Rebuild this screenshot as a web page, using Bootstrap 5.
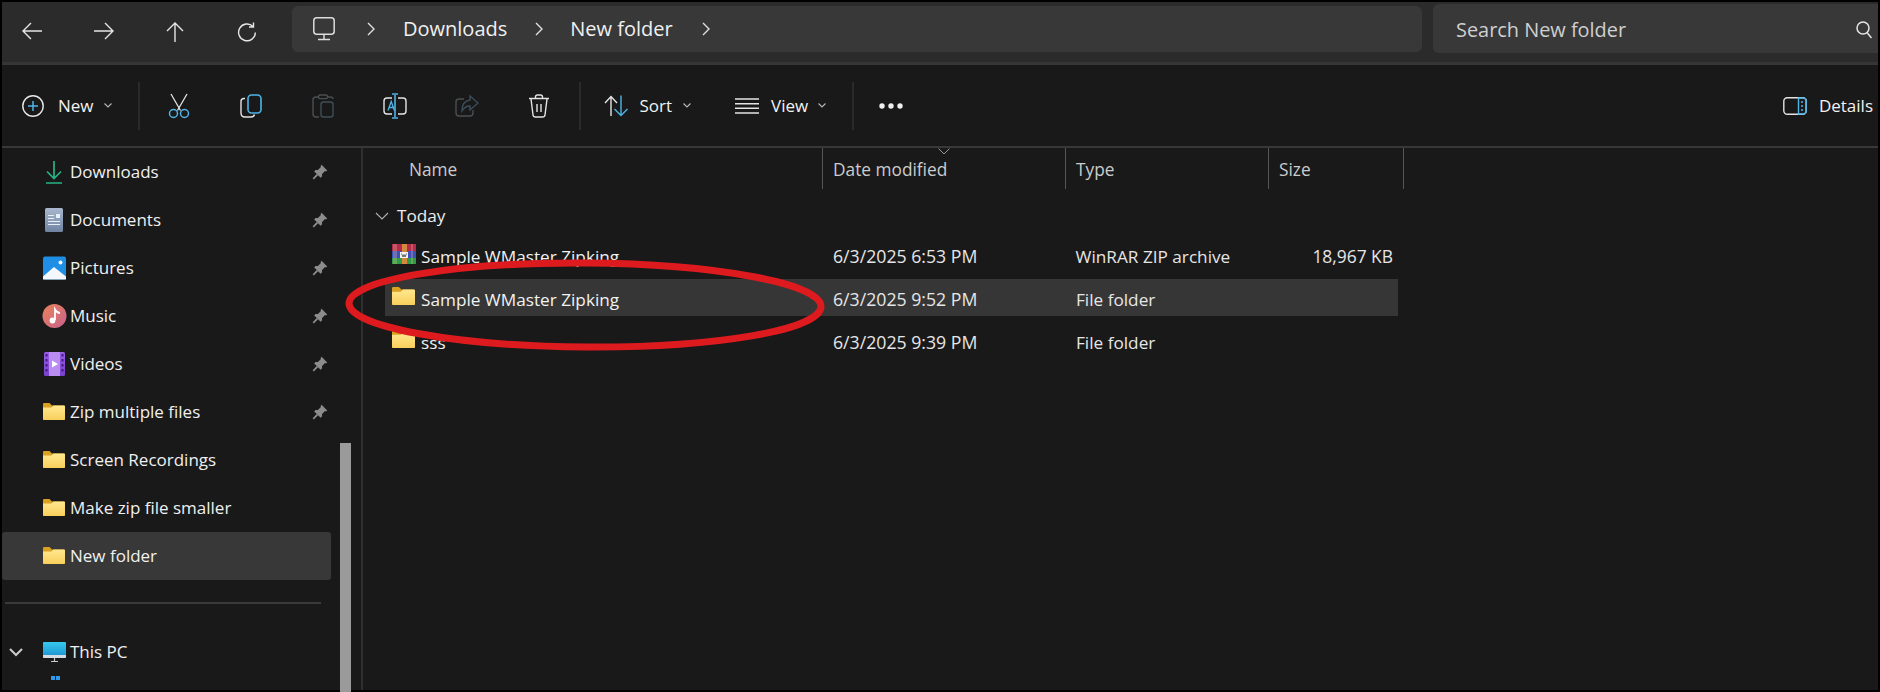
<!DOCTYPE html>
<html lang="en">
<head>
<meta charset="utf-8">
<title>New folder - File Explorer</title>
<link href="https://cdn.jsdelivr.net/npm/bootstrap@5.3.0/dist/css/bootstrap.min.css" rel="stylesheet">
<style>
html,body{width:1880px;height:692px;margin:0;overflow:hidden;background:#000;font-family:"Open Sans","Noto Sans",sans-serif;color:#f0f0f0}
.fx-win{width:1880px;height:692px;padding:2px 2px 2px 2px;position:relative;overflow:hidden}
.fx-defs{width:0;height:0;overflow:hidden;position:absolute}
.fx-top{height:60px;background:#2b2b2b}
.fx-navbtns{width:290px;padding-left:20px;flex:none}
.fx-navbtn{width:71.500px;height:20px;flex:none}
.fx-crumb{width:1130px;height:46px;margin-top:4px;background:#383838;border-radius:6px;padding-left:21px;font-size:20px}
.fx-search{width:445px;height:49px;margin:2px 0 0 11px;background:#383838;border-radius:6px 0 0 6px;padding:2px 6px 0 23px;font-size:19.900px;color:#cfcfcf}
.fx-rule{height:3px;background:#363636}
.fx-tools{height:81px;background:#191919;padding-left:20px;font-size:17px}
.fx-rule2{height:2px;background:#383838}
.fx-tool{width:72px;height:40px}
.fx-vbar{width:2px;height:48px;background:#2a2a2a}
.fx-lbl{color:#f2f2f2}
.fx-body{height:542px;background:#191919}
.fx-side{width:359px;height:542px;flex:none}
.fx-list{width:329px;overflow:hidden;height:542px;font-size:17px}
.fx-row{height:48px;padding-left:40px;padding-right:2px}
.fx-ico{width:26px;height:26px;flex:none;margin-right:2px}
.fx-name{flex:1;color:#f0f0f0;white-space:nowrap}
.fx-pin{width:16px;height:16px;margin-right:1px;flex:none}
.fx-cur{background:#383838;border-radius:3px}
.fx-sep{height:2px;background:#3a3a3a;margin:22px 10px 24px 3px}
.fx-chev{width:16px;height:16px;margin:0 18px 0 -34px;flex:none}
.fx-track{width:30px;padding:295px 0 0 9px}
.fx-thumb{width:11px;height:250px;background:#9a9a9a}
.fx-vline{width:2px;background:#2f2f2f;height:542px;flex:none}
.fx-main{flex:1;font-size:17.200px;position:relative}
.fx-head{height:44px;margin-left:22px;color:#cccccc;font-size:17.300px}
.fx-col1{width:438px;padding-left:24px}
.fx-col2{width:243px;padding-left:10px}
.fx-col3{width:203px;padding-left:10px}
.fx-col4{width:135px;padding-left:10px}
.fx-hcell{height:41px;border-right:1px solid #555;position:relative;padding-top:2px;flex:none}
.fx-caret{position:absolute;left:115px;top:0;width:12px;height:7px}
.fx-group{height:44px;padding-left:12px;padding-top:4px;color:#ececec}
.fx-line{height:37px;margin:0 0 6px 22px;width:1013px;color:#e6e6e6}
.fx-line.fx-on{background:#363636}
.fx-first{padding-left:7px;width:438px;color:#f2f2f2;flex:none}
.fx-right{width:130px;text-align:right;padding-right:5px;font-size:17.400px}
.fx-date{font-size:17.700px}
.fx-oval{position:absolute;left:0;top:0;pointer-events:none}
.fx-m14{margin-left:14px}.fx-m10{margin-left:10px}.fx-m26{margin-left:26px}.fx-m3{margin-left:3px}.fx-m4{margin-left:4px}.fx-m23{margin-left:23px}.fx-m12{margin-left:12px}.fx-m11{margin-left:11px}.fx-m44{margin-left:44px}.fx-m25{margin-left:25px}
.fx-det{margin-right:5px}
.fx-ch0{margin-left:32px}
.fx-c1{margin:0 28px 0 28px}.fx-c2{margin:0 29px 0 27px}
.fx-tail{height:20px}
.fx-t{padding-top:4px}
.fx-ftext{margin-left:1px}
</style>
</head>
<body>
<svg class="fx-defs" aria-hidden="true">
<defs>
<linearGradient id="gf" x1="0" y1="0" x2="0" y2="1"><stop offset="0" stop-color="#ffe88f"/><stop offset="1" stop-color="#f8cf5c"/></linearGradient>
<linearGradient id="gpc" x1="0" y1="0" x2="0" y2="1"><stop offset="0" stop-color="#35c9ee"/><stop offset="1" stop-color="#1c8fd0"/></linearGradient>
<linearGradient id="gmu" x1="0" y1="0" x2="1" y2="1"><stop offset="0" stop-color="#e8845a"/><stop offset="1" stop-color="#c9608f"/></linearGradient>
<linearGradient id="gdoc" x1="0" y1="0" x2="0" y2="1"><stop offset="0" stop-color="#a9b8cf"/><stop offset="1" stop-color="#6f83a1"/></linearGradient>
<linearGradient id="gvid" x1="0" y1="0" x2="0" y2="1"><stop offset="0" stop-color="#9b5ce8"/><stop offset="1" stop-color="#7b3fcf"/></linearGradient>
<symbol id="i-folder" viewBox="0 0 22 17"><path d="M0 1.200Q0 0 1.200 0H6.500L9 2.400H20.800Q22 2.400 22 3.600V15.800Q22 17 20.800 17H1.200Q0 17 0 15.800Z" fill="#d9a021"/><path d="M0 4.400L8.400 4.400 10.400 2.400H20.800Q22 2.400 22 3.600V15.800Q22 17 20.800 17H1.200Q0 17 0 15.800Z" fill="url(#gf)"/></symbol>
<symbol id="i-pin" viewBox="0 0 16 16"><path d="M9.600 .8L15.200 6.400 14 7.400 13 7.100 10.100 10 10 12.500 8.600 13.800 2.200 7.400 3.500 6 6 5.900 8.900 3 8.600 2Z" fill="#8c8c8c"/><path d="M5.400 10.600L1.200 14.800" stroke="#8c8c8c" stroke-width="1.800" fill="none"/></symbol>
</defs>
</svg>
<div class="fx-win">
  <div class="fx-top d-flex">
    <div class="fx-navbtns d-flex align-items-start">
      <div class="fx-navbtn d-flex mt-3 pt-1"><svg width="20" height="18" viewBox="0 0 20 18" fill="none" stroke="#e6e6e6" stroke-width="1.400"><path d="M20 9H1M9 1L1 9l8 8"/></svg></div>
      <div class="fx-navbtn d-flex mt-3 pt-1"><svg width="20" height="18" viewBox="0 0 20 18" fill="none" stroke="#e6e6e6" stroke-width="1.400"><path d="M0 9H19M11 1l8 8-8 8"/></svg></div>
      <div class="fx-navbtn d-flex mt-3 pt-1"><svg width="20" height="20" viewBox="0 0 20 20" fill="none" stroke="#e6e6e6" stroke-width="1.400"><path d="M10 20V1M2 9l8-8 8 8"/></svg></div>
      <div class="fx-navbtn d-flex mt-3 pt-1"><svg width="20" height="20" viewBox="0 0 20 20" fill="none" stroke="#e6e6e6" stroke-width="1.400"><path d="M16 4.500A8.400 8.400 0 1 0 18.400 10.500M16.500 .5V5H12"/></svg></div>
    </div>
    <div class="fx-crumb d-flex align-items-center">
      <svg width="22" height="24" viewBox="0 0 22 24" fill="none" stroke="#dcdcdc" stroke-width="1.500"><rect x=".8" y=".8" width="20.400" height="16.400" rx="3"/><path d="M11 17.500V22M5 22.500H17" /></svg>
      <svg class="fx-ch0" width="8" height="14" viewBox="0 0 8 14" fill="none" stroke="#e0e0e0" stroke-width="1.400"><path d="M1 1l6 6-6 6"/></svg>
      <span class="fx-c1">Downloads</span>
      <svg width="8" height="14" viewBox="0 0 8 14" fill="none" stroke="#e0e0e0" stroke-width="1.400"><path d="M1 1l6 6-6 6"/></svg>
      <span class="fx-c2">New folder</span>
      <svg width="8" height="14" viewBox="0 0 8 14" fill="none" stroke="#e0e0e0" stroke-width="1.400"><path d="M1 1l6 6-6 6"/></svg>
    </div>
    <div class="fx-search d-flex align-items-center justify-content-between">
      <span>Search New folder</span>
      <svg width="16" height="18" viewBox="0 0 16 18" fill="none" stroke="#e6e6e6" stroke-width="1.500"><circle cx="7" cy="7" r="6"/><path d="M11 11.500l4.500 5.500"/></svg>
    </div>
  </div>
  <div class="fx-rule"></div>
  <div class="fx-tools d-flex align-items-center">
    <svg width="22" height="22" viewBox="0 0 22 22" fill="none"><circle cx="11" cy="11" r="10.200" stroke="#e8e8e8" stroke-width="1.400"/><path d="M11 6v10M6 11h10" stroke="#4fb4e8" stroke-width="1.500"/></svg>
    <span class="fx-lbl fx-m14">New</span>
    <svg class="fx-m10" width="8" height="5" viewBox="0 0 8 5" fill="none" stroke="#b8b8b8" stroke-width="1.100"><path d="M.5.5L4 4 7.500.5"/></svg>
    <div class="fx-vbar fx-m26"></div>
    <div class="fx-tool d-flex align-items-center justify-content-center fx-m3">
      <svg width="22" height="26" viewBox="0 0 22 26" fill="none"><path d="M3 1l9.500 16.500M19 1L9.500 17.500" stroke="#e4e4e4" stroke-width="1.300"/><circle cx="5.500" cy="20.500" r="4" stroke="#4fb4e8" stroke-width="1.500"/><circle cx="16.500" cy="20.500" r="4" stroke="#4fb4e8" stroke-width="1.500"/></svg>
    </div>
    <div class="fx-tool d-flex align-items-center justify-content-center">
      <svg width="22" height="24" viewBox="0 0 22 24" fill="none"><path d="M5 4.500H4Q1 4.500 1 7.500V19Q1 23 5 23H11Q14 23 14.500 20.500" stroke="#e4e4e4" stroke-width="1.400"/><rect x="8" y="1" width="13" height="18" rx="3.500" stroke="#4fb4e8" stroke-width="1.600"/></svg>
    </div>
    <div class="fx-tool d-flex align-items-center justify-content-center">
      <svg width="22" height="24" viewBox="0 0 22 24" fill="none" stroke="#4a4f52" stroke-width="1.400"><path d="M7 3H4Q1 3 1 6V20Q1 23 4 23H7"/><path d="M15 3H18Q21 3 21 5"/><rect x="6.500" y="1" width="9" height="3.600" rx="1.600"/><rect x="9" y="8" width="12" height="15" rx="2.500" stroke="#3f4f57"/></svg>
    </div>
    <div class="fx-tool d-flex align-items-center justify-content-center">
      <svg width="24" height="26" viewBox="0 0 24 26" fill="none"><path d="M9 5H4Q1 5 1 8V18Q1 21 4 21H9M15 5H20Q23 5 23 8V18Q23 21 20 21H15" stroke="#e4e4e4" stroke-width="1.400"/><path d="M12 2V24M9 1H15M9 25H15" stroke="#4fb4e8" stroke-width="1.600"/><path d="M5 17.500L8.200 8.500 11.400 17.500M6 14.500H10.400" stroke="#4fb4e8" stroke-width="1.300"/></svg>
    </div>
    <div class="fx-tool d-flex align-items-center justify-content-center">
      <svg width="24" height="24" viewBox="0 0 24 24" fill="none" stroke-width="1.400"><path d="M9 5H4Q1 5 1 8V19Q1 22 4 22H15Q18 22 18 19V16" stroke="#4a4f52"/><path d="M15 2L23 9 15 16V12Q10 12 7 17 7 7 15 6Z" stroke="#3a4d58"/></svg>
    </div>
    <div class="fx-tool d-flex align-items-center justify-content-center">
      <svg width="22" height="24" viewBox="0 0 22 24" fill="none" stroke="#e4e4e4" stroke-width="1.400"><path d="M1 4.500H21M3 5L5 21Q5.300 23 7.500 23H14.500Q16.700 23 17 21L19 5M7.500 4V3Q7.500 1 9.500 1H12.500Q14.500 1 14.500 3V4M9 10V18M13 10V18"/></svg>
    </div>
    <div class="fx-vbar fx-m4"></div>
    <svg class="fx-m23" width="24" height="22" viewBox="0 0 24 22" fill="none" stroke-width="1.400"><path d="M7 21V1.500M1 8l6-6.500L13 8" stroke="#e4e4e4"/><path d="M17 .5V20.500M10.500 14l6.500 6.500 6.500-6.500" stroke="#4fb4e8"/></svg>
    <span class="fx-lbl fx-m12">Sort</span>
    <svg class="fx-m11" width="8" height="5" viewBox="0 0 8 5" fill="none" stroke="#b8b8b8" stroke-width="1.100"><path d="M.5.5L4 4 7.500.5"/></svg>
    <svg class="fx-m44" width="24" height="16" viewBox="0 0 24 16" fill="none" stroke="#e4e4e4" stroke-width="1.500"><path d="M0 1H24M0 5.700H24M0 10.300H24M0 15H24"/></svg>
    <span class="fx-lbl fx-m12">View</span>
    <svg class="fx-m10" width="8" height="5" viewBox="0 0 8 5" fill="none" stroke="#b8b8b8" stroke-width="1.100"><path d="M.5.5L4 4 7.500.5"/></svg>
    <div class="fx-vbar fx-m26"></div>
    <svg class="fx-m25" width="24" height="6" viewBox="0 0 24 6" fill="#f0f0f0"><circle cx="3" cy="3" r="2.700"/><circle cx="12" cy="3" r="2.700"/><circle cx="21" cy="3" r="2.700"/></svg>
    <div class="flex-grow-1"></div>
    <svg width="24" height="18" viewBox="0 0 24 18" fill="none" stroke-width="1.400"><rect x=".8" y=".8" width="22.400" height="16.400" rx="3.500" stroke="#e4e4e4"/><path d="M15.500 1V17H20Q23.200 17 23.200 14V4Q23.200 1 20 1Z" stroke="#4fb4e8"/><path d="M18 5H20M18 9H20M18 13H20" stroke="#4fb4e8"/></svg>
    <span class="fx-lbl fx-m12 fx-det">Details</span>
  </div>
  <div class="fx-rule2"></div>
  <div class="fx-body d-flex">
    <div class="fx-side d-flex">
      <div class="fx-list">
        <div class="fx-row d-flex align-items-center">
          <svg class="fx-ico" viewBox="0 0 26 26" fill="none" stroke="#25b585" stroke-width="1.700"><path d="M12 2V19M5 12.500L12 19.500 19 12.500M4 24H20"/></svg>
          <span class="fx-name">Downloads</span><svg class="fx-pin"><use href="#i-pin"/></svg>
        </div>
        <div class="fx-row d-flex align-items-center">
          <svg class="fx-ico" viewBox="0 0 26 26"><rect x="3" y="1" width="18" height="24" rx="1.500" fill="url(#gdoc)"/><path d="M6 8.500H12M6 11.500H12M6 14.500H18M6 17.500H18" stroke="#e8eef6" stroke-width="1"/><rect x="14" y="7" width="4" height="4" fill="#e8eef6"/></svg>
          <span class="fx-name">Documents</span><svg class="fx-pin"><use href="#i-pin"/></svg>
        </div>
        <div class="fx-row d-flex align-items-center">
          <svg class="fx-ico" viewBox="0 0 26 26"><rect x="1" y="1.500" width="23" height="23" rx="2" fill="#1f8fe6"/><path d="M1 24.500V21.500L12 12 24 21.500V24.500Z" fill="#f4f8fc"/><circle cx="18.500" cy="7.500" r="2" fill="#f4f8fc"/></svg>
          <span class="fx-name">Pictures</span><svg class="fx-pin"><use href="#i-pin"/></svg>
        </div>
        <div class="fx-row d-flex align-items-center">
          <svg class="fx-ico" viewBox="0 0 26 26"><circle cx="12.500" cy="13" r="12" fill="url(#gmu)"/><path d="M13 17V6.500Q15 10 18 10" fill="none" stroke="#fff" stroke-width="1.800"/><circle cx="10.500" cy="17.500" r="2.900" fill="#fff"/></svg>
          <span class="fx-name">Music</span><svg class="fx-pin"><use href="#i-pin"/></svg>
        </div>
        <div class="fx-row d-flex align-items-center">
          <svg class="fx-ico" viewBox="0 0 26 26"><rect x="2" y="1" width="21" height="24" rx="1.500" fill="url(#gvid)"/><rect x="7" y="1" width="11" height="24" fill="#b98cf2"/><path d="M10 9.500L16 13 10 16.500Z" fill="#fff"/><g fill="#3d1f7a"><rect x="3.500" y="3" width="2" height="2.500"/><rect x="3.500" y="8" width="2" height="2.500"/><rect x="3.500" y="13" width="2" height="2.500"/><rect x="3.500" y="18" width="2" height="2.500"/><rect x="19.500" y="3" width="2" height="2.500"/><rect x="19.500" y="8" width="2" height="2.500"/><rect x="19.500" y="13" width="2" height="2.500"/><rect x="19.500" y="18" width="2" height="2.500"/></g></svg>
          <span class="fx-name">Videos</span><svg class="fx-pin"><use href="#i-pin"/></svg>
        </div>
        <div class="fx-row d-flex align-items-center">
          <svg class="fx-ico"><use href="#i-folder" x="1" y="4" width="22" height="17"/></svg>
          <span class="fx-name">Zip multiple files</span><svg class="fx-pin"><use href="#i-pin"/></svg>
        </div>
        <div class="fx-row d-flex align-items-center">
          <svg class="fx-ico"><use href="#i-folder" x="1" y="4" width="22" height="17"/></svg>
          <span class="fx-name">Screen Recordings</span>
        </div>
        <div class="fx-row d-flex align-items-center">
          <svg class="fx-ico"><use href="#i-folder" x="1" y="4" width="22" height="17"/></svg>
          <span class="fx-name">Make zip file smaller</span>
        </div>
        <div class="fx-row fx-cur d-flex align-items-center">
          <svg class="fx-ico"><use href="#i-folder" x="1" y="4" width="22" height="17"/></svg>
          <span class="fx-name">New folder</span>
        </div>
        <div class="fx-sep"></div>
        <div class="fx-row d-flex align-items-center">
          <svg class="fx-chev" viewBox="0 0 16 16" fill="none" stroke="#c8c8c8" stroke-width="2.200"><path d="M2 5l6 6 6-6"/></svg>
          <svg class="fx-ico" viewBox="0 0 26 26"><rect x="1" y="3" width="23" height="16" rx="1" fill="url(#gpc)"/><path d="M1 16H24V18Q24 19 23 19H2Q1 19 1 18Z" fill="#d5dde3"/><path d="M12.500 19V22M9 22.500H16" stroke="#c4ccd2" stroke-width="1.200"/></svg>
          <span class="fx-name">This PC</span>
        </div>
        <div class="fx-row d-flex align-items-start fx-tail">
          <svg class="fx-ico" viewBox="0 0 26 26"><g fill="#2d9bea"><rect x="9" y="0" width="4" height="4"/><rect x="14" y="0" width="4" height="4"/></g></svg>
        </div>
      </div>
      <div class="fx-track"><div class="fx-thumb"></div></div>
    </div>
    <div class="fx-vline"></div>
    <div class="fx-main">
      <div class="fx-head d-flex">
        <div class="fx-hcell d-flex align-items-center fx-col1">Name</div>
        <div class="fx-hcell d-flex align-items-center fx-col2">Date modified<svg class="fx-caret" viewBox="0 0 12 7" fill="none" stroke="#9a9a9a" stroke-width="1"><path d="M.5.500L6 6 11.500.500"/></svg></div>
        <div class="fx-hcell d-flex align-items-center fx-col3">Type</div>
        <div class="fx-hcell d-flex align-items-center fx-col4">Size</div>
      </div>
      <div class="fx-group d-flex align-items-center">
        <svg class="me-2" width="14" height="8" viewBox="0 0 14 8" fill="none" stroke="#b0b0b0" stroke-width="1.100"><path d="M1 1l6 6 6-6"/></svg>
        <span>Today</span>
      </div>
      <div class="fx-line d-flex align-items-center">
        <div class="fx-first d-flex align-items-center gap-1">
          <svg width="24" height="20" viewBox="0 0 24 20"><rect x="0" y="0" width="24" height="7" fill="#b5294e"/><rect x="0" y="7" width="24" height="7" fill="#3d4fb8"/><rect x="0" y="14" width="24" height="6" fill="#2f9a48"/><path d="M2 0V20M4 0V20M20 0V20" stroke="#f0d090" stroke-width=".8" opacity=".7"/><rect x="10" y="0" width="5" height="20" fill="#d48a3c"/><rect x="8" y="8" width="8" height="6" fill="#f2f2f2"/><path d="M9.500 9.500L11 13 12 10.500 13 13 14.500 9.500" stroke="#444" fill="none" stroke-width=".8"/></svg>
          <span class="fx-t fx-ftext">Sample WMaster Zipking</span>
        </div>
        <div class="fx-col2 fx-t fx-date">6/3/2025 6:53 PM</div>
        <div class="fx-col3 fx-t">WinRAR ZIP archive</div>
        <div class="fx-right fx-t">18,967 KB</div>
      </div>
      <div class="fx-line fx-on d-flex align-items-center">
        <div class="fx-first d-flex align-items-center gap-1">
          <svg width="24" height="20" viewBox="0 0 24 20"><use href="#i-folder" x="0" y="0" width="23" height="18"/></svg>
          <span class="fx-t fx-ftext">Sample WMaster Zipking</span>
        </div>
        <div class="fx-col2 fx-t fx-date">6/3/2025 9:52 PM</div>
        <div class="fx-col3 fx-t">File folder</div>
      </div>
      <div class="fx-line d-flex align-items-center">
        <div class="fx-first d-flex align-items-center gap-1">
          <svg width="24" height="20" viewBox="0 0 24 20"><use href="#i-folder" x="0" y="0" width="23" height="18"/></svg>
          <span class="fx-t fx-ftext">sss</span>
        </div>
        <div class="fx-col2 fx-t fx-date">6/3/2025 9:39 PM</div>
        <div class="fx-col3 fx-t">File folder</div>
      </div>
    </div>
  </div>
  <svg class="fx-oval" width="1880" height="692" viewBox="0 0 1880 692" fill="none"><ellipse cx="585" cy="305" rx="236" ry="42" stroke="#dd1b1f" stroke-width="7" transform="rotate(.4 585 305)"/></svg>
</div>
<script src="https://cdn.jsdelivr.net/npm/bootstrap@5.3.0/dist/js/bootstrap.bundle.min.js"></script>
</body>
</html>
